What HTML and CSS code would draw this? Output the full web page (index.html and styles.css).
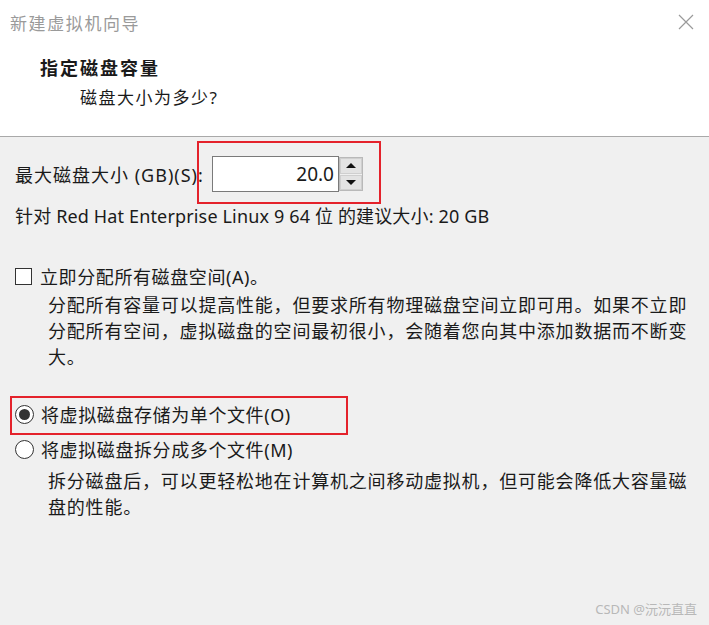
FILE: index.html
```html
<!DOCTYPE html>
<html lang="zh-CN">
<head>
    <meta charset="UTF-8">
    <title>新建虚拟机向导</title>
    <link rel="stylesheet" href="styles.css">
</head>
<body>
    <div class="wizard">
        <div class="header">
            <div class="title-bar">
                <div class="title">新建虚拟机向导</div>
                <svg class="close" width="16" height="16" viewBox="0 0 16 16">
                    <path d="M1 1 L15 15 M15 1 L1 15" stroke="#9a9a9a" stroke-width="1.2" fill="none"/>
                </svg>
            </div>
            <div class="step-title">指定磁盘容量</div>
            <div class="step-sub">磁盘大小为多少?</div>
        </div>

        <div class="content">
            <div class="size-row">
                <span class="label">最大磁盘大小 (GB)(S):</span>
                <div class="spin">
                    <div class="spin-input">20.0</div>
                    <div class="spin-buttons">
                        <div class="spin-btn"><span class="arrow-up"></span></div>
                        <div class="spin-btn"><span class="arrow-down"></span></div>
                    </div>
                </div>
                <div class="mark mark-size"></div>
            </div>

            <div class="hint">针对 Red Hat Enterprise Linux 9 64 位 的建议大小: 20 GB</div>

            <div class="option check-row">
                <span class="checkbox"></span>
                <span class="opt-label">立即分配所有磁盘空间(A)。</span>
            </div>
            <div class="desc">
                分配所有容量可以提高性能，但要求所有物理磁盘空间立即可用。如果不立即<br>
                分配所有空间，虚拟磁盘的空间最初很小，会随着您向其中添加数据而不断变<br>
                大。
            </div>

            <div class="option radio-row first">
                <span class="radio checked"></span>
                <span class="opt-label">将虚拟磁盘存储为单个文件(O)</span>
                <div class="mark mark-radio"></div>
            </div>
            <div class="option radio-row second">
                <span class="radio"></span>
                <span class="opt-label">将虚拟磁盘拆分成多个文件(M)</span>
            </div>
            <div class="desc desc-split">
                拆分磁盘后，可以更轻松地在计算机之间移动虚拟机，但可能会降低大容量磁<br>
                盘的性能。
            </div>
        </div>

        <div class="watermark">CSDN @沅沅直直</div>
    </div>
</body>
</html>
```

FILE: styles.css
```css
* {
    margin: 0;
    padding: 0;
    box-sizing: border-box;
}
body {
    font-family: "Noto Sans", "Noto Sans CJK SC", sans-serif;
    background-color: #f0f0f0;
    color: #1a1a1a;
    width: 709px;
    height: 625px;
    overflow: hidden;
}
.wizard {
    position: relative;
    height: 625px;
}
.header {
    background: #ffffff;
    height: 137px;
    border-bottom: 1px solid #a9a9a9;
}
.title-bar {
    display: flex;
    justify-content: space-between;
    align-items: center;
    padding: 10px 15px 0 10px;
    height: 34px;
}
.title {
    font-size: 17px;
    color: #9a9a9a;
    letter-spacing: 1.6px;
}
.step-title {
    font-size: 18px;
    font-weight: bold;
    margin: 22px 0 0 40px;
    letter-spacing: 2px;
    line-height: 24px;
}
.step-sub {
    font-size: 17px;
    margin: 6px 0 0 80px;
    letter-spacing: 1.5px;
    line-height: 24px;
}

.content {
    padding: 0 0 0 15px;
    font-size: 18px;
}
.size-row {
    position: relative;
    display: flex;
    align-items: center;
    margin-top: 19px;
    height: 36px;
}
.label {
    width: 197px;
    letter-spacing: 1px;
}
.spin {
    display: flex;
    align-items: center;
}
.spin-input {
    width: 127px;
    height: 36px;
    background: #ffffff;
    border: 1px solid #7a7a7a;
    text-align: right;
    padding-right: 4px;
    line-height: 34px;
    font-size: 19px;
}
.spin-buttons {
    display: flex;
    flex-direction: column;
    gap: 1px;
    border: 1px solid #b9b9b9;
    background: #f0f0f0;
    height: 34px;
}
.spin-btn {
    width: 22px;
    height: 16px;
    background: #e3e3e3;
    border: 1px solid #cfcfcf;
    display: flex;
    justify-content: center;
    align-items: center;
}
.arrow-up {
    border-left: 5px solid transparent;
    border-right: 5px solid transparent;
    border-bottom: 5px solid #111;
}
.arrow-down {
    border-left: 5px solid transparent;
    border-right: 5px solid transparent;
    border-top: 5px solid #111;
}
.mark {
    position: absolute;
    border: 2px solid #e4222b;
}
.mark-size {
    left: 182px;
    top: -15px;
    width: 184px;
    height: 63px;
}
.hint {
    margin-top: 12px;
    line-height: 24px;
    letter-spacing: 0.15px;
}

.option {
    display: flex;
    align-items: center;
    position: relative;
}
.check-row {
    margin-top: 36px;
    height: 24px;
}
.checkbox {
    width: 17px;
    height: 17px;
    border: 1px solid #333333;
    background: #ffffff;
    margin-right: 8px;
}
.opt-label {
    letter-spacing: 0.6px;
}
.desc {
    margin: 4px 0 0 33px;
    line-height: 26px;
    letter-spacing: 0.8px;
}
.radio-row {
    height: 26px;
}
.radio-row.first {
    margin-top: 31px;
}
.radio-row.second {
    margin-top: 9px;
}
.radio {
    width: 19px;
    height: 19px;
    border-radius: 50%;
    border: 1px solid #333333;
    background: #ffffff;
    margin-right: 7px;
    display: flex;
    justify-content: center;
    align-items: center;
}
.radio.checked::after {
    content: "";
    width: 11px;
    height: 11px;
    border-radius: 50%;
    background: #333333;
}
.mark-radio {
    left: -5px;
    top: -5px;
    width: 338px;
    height: 39px;
}
.desc-split {
    margin-top: 6px;
}

.watermark {
    position: absolute;
    right: 12px;
    bottom: 7px;
    font-size: 13px;
    color: #b8b8b8;
}
```
